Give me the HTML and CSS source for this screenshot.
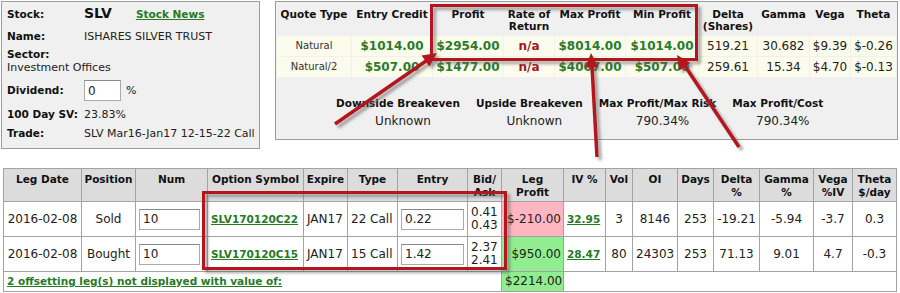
FILE: index.html
```html
<!DOCTYPE html>
<html lang="en">
<head>
  <meta charset="UTF-8">
  <meta name="viewport" content="width=device-width, initial-scale=1.0">
  <title>SLV Spread</title>
  <link rel="stylesheet" href="styles.css">
</head>
<body>
  <div class="page">
    <div class="top">
      <div class="panel stock-info">
        <table class="info">
          <tr class="row-stock">
            <td class="label">Stock:</td>
            <td><span class="symbol">SLV</span><a href="#" class="news">Stock News</a></td>
          </tr>
          <tr class="row-name">
            <td class="label">Name:</td>
            <td>ISHARES SILVER TRUST</td>
          </tr>
          <tr class="row-sector">
            <td colspan="2"><span class="label">Sector:</span><br>Investment Offices</td>
          </tr>
          <tr class="row-dividend">
            <td class="label">Dividend:</td>
            <td><input type="text" class="dividend" value="0"><span class="pct">%</span></td>
          </tr>
          <tr class="row-sv">
            <td class="label">100 Day SV:</td>
            <td>23.83%</td>
          </tr>
          <tr class="row-trade">
            <td class="label">Trade:</td>
            <td>SLV Mar16-Jan17 12-15-22 Call</td>
          </tr>
        </table>
      </div>

      <div class="panel quote">
        <table class="quotes">
          <colgroup>
            <col class="q-type"><col class="q-credit"><col class="q-profit"><col class="q-rate"><col class="q-max">
            <col class="q-min"><col class="q-delta"><col class="q-gamma"><col class="q-vega"><col class="q-theta">
          </colgroup>
          <tr>
            <th>Quote Type</th>
            <th>Entry Credit</th>
            <th>Profit</th>
            <th>Rate of<br>Return</th>
            <th>Max Profit</th>
            <th>Min Profit</th>
            <th>Delta<br>(Shares)</th>
            <th>Gamma</th>
            <th>Vega</th>
            <th>Theta</th>
          </tr>
          <tr>
            <td class="kind">Natural</td>
            <td class="money">$1014.00</td>
            <td class="money">$2954.00</td>
            <td class="na">n/a</td>
            <td class="money">$8014.00</td>
            <td class="money">$1014.00</td>
            <td>519.21</td>
            <td>30.682</td>
            <td>$9.39</td>
            <td>$-0.26</td>
          </tr>
          <tr>
            <td class="kind">Natural/2</td>
            <td class="money">$507.00</td>
            <td class="money">$1477.00</td>
            <td class="na">n/a</td>
            <td class="money">$4007.00</td>
            <td class="money">$507.00</td>
            <td>259.61</td>
            <td>15.34</td>
            <td>$4.70</td>
            <td>$-0.13</td>
          </tr>
        </table>

        <table class="summary">
          <tr>
            <th>Downside Breakeven</th>
            <th>Upside Breakeven</th>
            <th>Max Profit/Max Risk</th>
            <th>Max Profit/Cost</th>
          </tr>
          <tr>
            <td>Unknown</td>
            <td>Unknown</td>
            <td>790.34%</td>
            <td>790.34%</td>
          </tr>
        </table>
      </div>
    </div>

    <table class="legs">
      <colgroup>
        <col class="l-date"><col class="l-pos"><col class="l-num"><col class="l-sym"><col class="l-exp">
        <col class="l-type"><col class="l-entry"><col class="l-bid"><col class="l-profit"><col class="l-iv">
        <col class="l-vol"><col class="l-oi"><col class="l-days"><col class="l-delta"><col class="l-gamma">
        <col class="l-vega"><col class="l-theta">
      </colgroup>
      <tr>
        <th>Leg Date</th>
        <th>Position</th>
        <th>Num</th>
        <th>Option Symbol</th>
        <th>Expire</th>
        <th>Type</th>
        <th>Entry</th>
        <th>Bid/<br>Ask</th>
        <th>Leg<br>Profit</th>
        <th>IV %</th>
        <th>Vol</th>
        <th>OI</th>
        <th>Days</th>
        <th>Delta<br>%</th>
        <th>Gamma<br>%</th>
        <th>Vega<br>%IV</th>
        <th>Theta<br>$/day</th>
      </tr>
      <tr>
        <td>2016-02-08</td>
        <td>Sold</td>
        <td class="left"><input type="text" class="num" value="10"></td>
        <td class="left"><a href="#">SLV170120C22</a></td>
        <td class="left">JAN17</td>
        <td class="left">22 Call</td>
        <td class="left"><input type="text" class="entry" value="0.22"></td>
        <td class="left">0.41<br>0.43</td>
        <td class="right loss">$-210.00</td>
        <td class="left"><a href="#">32.95</a></td>
        <td>3</td>
        <td>8146</td>
        <td>253</td>
        <td>-19.21</td>
        <td>-5.94</td>
        <td>-3.7</td>
        <td>0.3</td>
      </tr>
      <tr>
        <td>2016-02-08</td>
        <td>Bought</td>
        <td class="left"><input type="text" class="num" value="10"></td>
        <td class="left"><a href="#">SLV170120C15</a></td>
        <td class="left">JAN17</td>
        <td class="left">15 Call</td>
        <td class="left"><input type="text" class="entry" value="1.42"></td>
        <td class="left">2.37<br>2.41</td>
        <td class="right gain">$950.00</td>
        <td class="left"><a href="#">28.47</a></td>
        <td>80</td>
        <td>24303</td>
        <td>253</td>
        <td>71.13</td>
        <td>9.01</td>
        <td>4.7</td>
        <td>-0.3</td>
      </tr>
      <tr class="offset-row">
        <td colspan="8" class="left"><a href="#">2 offsetting leg(s) not displayed with value of:</a></td>
        <td class="right gain">$2214.00</td>
        <td colspan="8"></td>
      </tr>
    </table>

    <!-- red call-outs drawn over the screenshot -->
    <svg class="marks" width="900" height="293" viewBox="0 0 900 293">
      <defs>
        <filter id="shade" filterUnits="userSpaceOnUse" x="0" y="0" width="900" height="293">
          <feDropShadow dx="3" dy="3" stdDeviation="1.6" flood-color="#555" flood-opacity="0.55"/>
        </filter>
      </defs>
      <g filter="url(#shade)">
        <g fill="none" stroke="#b3141c" stroke-width="3">
          <rect x="431.5" y="5.5" width="265" height="54"/>
          <rect x="203.5" y="192.5" width="302" height="76"/>
        </g>
        <g stroke="#b3141c" stroke-width="3.5">
          <line x1="335" y1="124" x2="426" y2="61"/>
          <line x1="597" y1="157" x2="592" y2="66"/>
          <line x1="739" y1="147" x2="685" y2="66"/>
        </g>
        <g fill="#b3141c">
          <polygon points="437,53 429.4,66.4 421.6,55.6"/>
          <polygon points="591,53 598.3,67.1 585.3,67.8"/>
          <polygon points="677,55 690.3,63 679.3,70.4"/>
        </g>
      </g>
    </svg>
  </div>
</body>
</html>
```

FILE: styles.css
```css
body {
  margin: 0;
  font-family: "DejaVu Sans", Verdana, sans-serif;
  font-size: 11px;
  color: #222;
  background-color: #fff;
}

a {
  color: #267a26;
  font-weight: bold;
  font-size: 10.5px;
}

.page {
  position: relative;
  width: 900px;
  height: 293px;
  padding: 1px;
  box-sizing: border-box;
}

.top {
  display: flex;
  align-items: flex-start;
  gap: 15px;
}

.panel {
  background-color: #f0f0f0;
  border: 1px solid #9c9c9c;
  box-sizing: border-box;
}

/* stock info box */

.stock-info {
  width: 259px;
  height: 148px;
  padding-left: 5px;
}

.info {
  border-collapse: collapse;
  line-height: 13px;
}

.info td {
  padding: 3px 0 2px;
  vertical-align: middle;
  white-space: nowrap;
}

.info .label {
  width: 77px;
  font-weight: bold;
  font-size: 10.5px;
  color: #111;
}

.info .row-stock td {
  padding: 5px 0 6px;
}

.info .row-sector td {
  padding: 3px 0;
}

.info .row-dividend td {
  padding: 3px 0;
}

.info .row-sv td {
  padding: 4px 0 3px;
}

.symbol {
  font-size: 14px;
  font-weight: bold;
  color: #111;
}

.news {
  margin-left: 24px;
}

.dividend {
  width: 37px;
  height: 21px;
  box-sizing: border-box;
  padding: 1px 3px;
  border: 1px solid #aaa;
  border-top-color: #888;
  font: 12px "DejaVu Sans", Verdana, sans-serif;
  color: #222;
  vertical-align: middle;
}

.pct {
  margin-left: 5px;
  vertical-align: middle;
}

/* quote box */

.quote {
  width: 623px;
  height: 139px;
}

.quotes {
  width: 100%;
  border-spacing: 1px;
  table-layout: fixed;
}

.q-type { width: 74px; }
.q-credit { width: 80px; }
.q-profit { width: 70px; }
.q-rate { width: 50px; }
.q-max { width: 70px; }
.q-min { width: 72px; }
.q-delta { width: 58px; }
.q-gamma { width: 51px; }
.q-vega { width: 40px; }
.q-theta { width: 45px; }

.quotes th {
  font-size: 10.5px;
  line-height: 12px;
  padding: 5px 0 3px;
  vertical-align: top;
  color: #111;
}

.quotes td {
  background-color: #fcfcec;
  text-align: center;
  font-size: 12px;
  line-height: 14px;
  padding: 3px 0;
  white-space: nowrap;
}

.quotes .kind {
  font-size: 10px;
  color: #333;
}

.quotes .money {
  color: #2b7a2b;
  font-weight: bold;
}

.quotes .na {
  color: #a3161c;
  font-weight: bold;
}

.summary {
  margin: 19px 0 0 52px;
  border-collapse: collapse;
}

.summary th {
  font-size: 10.5px;
  line-height: 12px;
  padding: 0 8px;
  color: #111;
  white-space: nowrap;
}

.summary td {
  font-size: 12px;
  line-height: 14px;
  padding: 5px 0 0 10px;
  text-align: center;
}

/* legs table */

.legs {
  width: 893px;
  margin: 19px 0 0 2px;
  border-collapse: collapse;
  table-layout: fixed;
}

.l-date { width: 78px; }
.l-pos { width: 54px; }
.l-num { width: 72px; }
.l-sym { width: 96px; }
.l-exp { width: 44px; }
.l-type { width: 50px; }
.l-entry { width: 70px; }
.l-bid { width: 34px; }
.l-profit { width: 62px; }
.l-iv { width: 42px; }
.l-vol { width: 27px; }
.l-oi { width: 45px; }
.l-days { width: 36px; }
.l-delta { width: 46px; }
.l-gamma { width: 54px; }
.l-vega { width: 39px; }
.l-theta { width: 44px; }

.legs th,
.legs td {
  border: 1px solid #a3a3a3;
}

.legs th {
  background-color: #dcdcdc;
  font-size: 10.5px;
  line-height: 13px;
  padding: 4px 1px 2px;
  vertical-align: top;
  color: #111;
  white-space: nowrap;
}

.legs td {
  font-size: 12px;
  line-height: 13px;
  padding: 4px 3px;
  text-align: center;
  vertical-align: middle;
  white-space: nowrap;
  overflow: hidden;
}

.legs td.left {
  text-align: left;
}

.legs td.right {
  text-align: right;
  padding-right: 2px;
}

.legs .offset-row td {
  padding-top: 3px;
  padding-bottom: 3px;
}

.legs .loss {
  background-color: #ffb6c1;
}

.legs .gain {
  background-color: #90ee90;
}

.legs input {
  height: 21px;
  box-sizing: border-box;
  padding: 1px 3px;
  border: 1px solid #aaa;
  border-top-color: #888;
  font: 12px "DejaVu Sans", Verdana, sans-serif;
  color: #222;
  vertical-align: middle;
}

.legs .num {
  width: 61px;
}

.legs .entry {
  width: 63px;
}

.marks {
  position: absolute;
  top: 0;
  left: 0;
  pointer-events: none;
}
```
